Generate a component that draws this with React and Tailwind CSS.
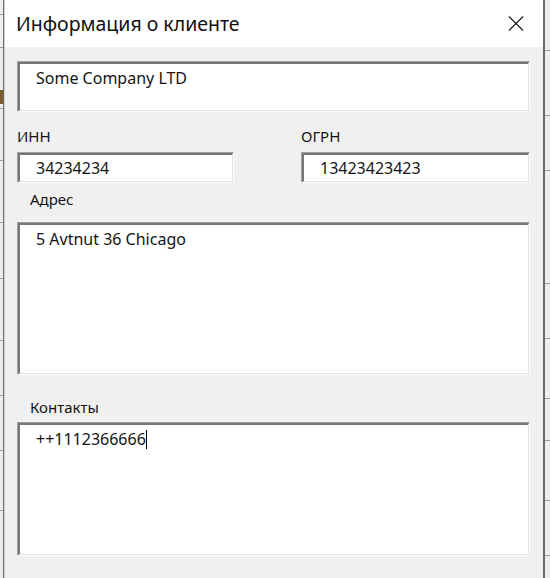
import React from "react";

// ── Sunken Win32-style edit box ───────────────────────────────────────────────

function EditBox({ className = "", children }) {
  return (
    <div
      className={`border-t border-l border-t-[#a0a0a0] border-l-[#a0a0a0] border-b border-r border-b-[#fbfbfb] border-r-[#fbfbfb] ${className}`}
    >
      <div className="h-full bg-white border-t-2 border-l-2 border-t-[#767676] border-l-[#767676] border-b border-r border-b-[#e3e3e3] border-r-[#e3e3e3]">
        {children}
      </div>
    </div>
  );
}

// ── Strips of the window behind ───────────────────────────────────────────────

function BackStrip({ lines, side }) {
  return (
    <div className="relative h-full w-full bg-[#eeeeee]">
      {lines.map((y) => (
        <div
          key={y}
          className="absolute left-0 right-0 h-px bg-[#9a9a9a]"
          style={{ top: y }}
        />
      ))}
      {side === "left" && (
        <div className="absolute top-[90px] left-0 w-[3px] h-[14px] bg-[#7a5a30]" />
      )}
    </div>
  );
}

export default function App() {
  return (
    <div
      className="w-[550px] h-[578px] overflow-hidden flex bg-[#f0f0f0] text-[#141414]"
      style={{ fontFamily: '"Noto Sans", "Open Sans", sans-serif' }}
    >
      {/* left edge of window behind */}
      <div className="w-[3px] h-full">
        <BackStrip side="left" lines={[14, 47, 108, 160, 222, 278, 340, 395, 450, 510]} />
      </div>
      <div className="w-px h-full bg-[#6f6f6f]" />
      <div className="w-px h-full bg-[#d0d0d0]" />

      {/* dialog */}
      <div className="w-[538px] h-full flex flex-col bg-[#f0f0f0]">
        {/* title bar */}
        <div className="h-[47px] bg-white flex items-center justify-between pl-[11px] pr-[19px]">
          <span className="text-[19.5px] text-[#111]">Информация о клиенте</span>
          <svg width="16" height="15" viewBox="0 0 16 15" className="text-[#222]">
            <line x1="1" y1="0.5" x2="15" y2="14.5" stroke="currentColor" strokeWidth="1.2" />
            <line x1="15" y1="0.5" x2="1" y2="14.5" stroke="currentColor" strokeWidth="1.2" />
          </svg>
        </div>

        {/* body */}
        <div className="flex-1 flex flex-col pl-[12px] pr-[13px] pt-[14px] text-[15px]">
          <EditBox className="h-[51px]">
            <div className="pl-[16px] pt-[2px] text-[16px]">Some Company LTD</div>
          </EditBox>

          <div className="flex mt-[16px]">
            <div className="w-[217px] flex flex-col">
              <div className="h-[20px] leading-[16px]">ИНН</div>
              <EditBox className="mt-[4px] h-[31px]">
                <div className="pl-[16px] text-[16px] leading-[26px]">34234234</div>
              </EditBox>
            </div>
            <div className="ml-[67px] flex-1 flex flex-col">
              <div className="h-[20px] leading-[16px]">ОГРН</div>
              <EditBox className="mt-[4px] h-[31px]">
                <div className="pl-[16px] text-[16px] leading-[26px]">13423423423</div>
              </EditBox>
            </div>
          </div>

          <div className="pl-[13px] mt-[8px] h-[20px] leading-[16px]">Адрес</div>
          <EditBox className="mt-[11px] h-[153px]">
            <div className="pl-[16px] pt-[2px] text-[16px]">5 Avtnut 36 Chicago</div>
          </EditBox>

          <div className="pl-[13px] mt-[24px] h-[20px] leading-[16px]">Контакты</div>
          <EditBox className="mt-[3px] h-[134px]">
            <div className="pl-[16px] pt-[2px] text-[16px] flex items-center">
              <span>++1112366666</span>
              <span className="w-px h-[19px] bg-black" />
            </div>
          </EditBox>
        </div>
      </div>

      {/* right edge of window behind */}
      <div className="w-[2px] h-full bg-[#6a6a6a]" />
      <div className="w-[5px] h-full">
        <BackStrip side="right" lines={[50, 115, 170, 283, 338, 398, 440, 500, 555]} />
      </div>
    </div>
  );
}
